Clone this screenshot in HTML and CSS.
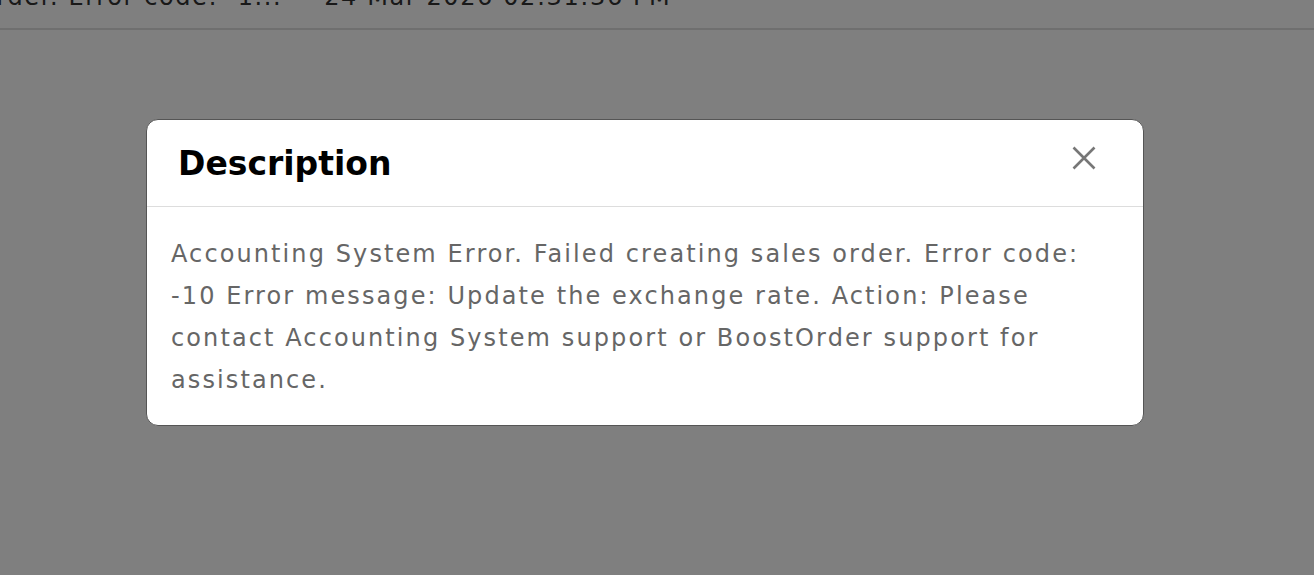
FILE: index.html
```html
<!DOCTYPE html>
<html>
<head>
<meta charset="utf-8">
<link rel="stylesheet" href="styles.css">
</head>
<body>
<div class="page">
  <div class="list-row">
    <span class="cell-desc">Order. Error code: -1...</span>
    <span class="cell-date">24 Mar 2026 02:31:36 PM</span>
  </div>
</div>
<div class="overlay">
  <div class="modal">
    <div class="modal-header">
      <h2 class="modal-title">Description</h2>
      <button class="close-btn" aria-label="Close">
        <svg width="24" height="24" viewBox="0 0 24 24"><path d="M1.5 1.5 L22.5 22.5 M22.5 1.5 L1.5 22.5" stroke="#777" stroke-width="2.6" fill="none"/></svg>
      </button>
    </div>
    <div class="modal-body">Accounting System Error. Failed creating sales order. Error code: -10 Error message: Update the exchange rate. Action: Please contact Accounting System support or BoostOrder support for assistance.</div>
  </div>
</div>
</body>
</html>
```

FILE: styles.css
```css
* { box-sizing: border-box; }
html, body { margin: 0; padding: 0; height: 100%; }
body { background: #fff; font-family: "DejaVu Sans", sans-serif; overflow: hidden; }
.page { margin-top: -22px; }
.list-row { display: flex; gap: 42px; height: 52px; align-items: flex-end; padding-bottom: 17px; border-bottom: 2px solid #dedede; margin-left: -24px; font-size: 24px; line-height: 28px; letter-spacing: 1.6px; color: #333; }
.cell-desc { white-space: nowrap; }
.cell-date { white-space: nowrap; }
.overlay { position: fixed; inset: 0; background: rgba(0,0,0,0.5); padding-top: 119px; }
.modal { width: 998px; margin-left: 146px; background: #fff; border: 1px solid #555; border-radius: 12px; }
.modal-header { height: 87px; display: flex; align-items: center; justify-content: space-between; padding: 0 47px 0 31px; border-bottom: 1px solid #ddd; }
.modal-title { margin: 0; font-size: 33px; font-weight: 700; color: #000; }
.close-btn { background: none; border: 0; padding: 0; width: 24px; height: 24px; margin-top: -10px; cursor: pointer; }
.close-btn svg { display: block; }
.modal-body { padding: 26px 24px 24px; font-size: 24px; line-height: 42px; letter-spacing: 2.1px; color: #666; }
```
